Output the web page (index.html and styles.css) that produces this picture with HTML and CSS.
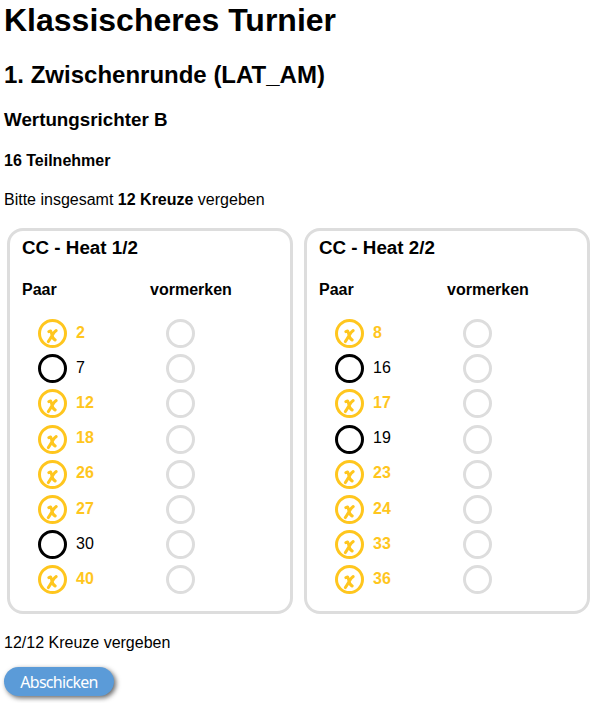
FILE: index.html
```html
<!DOCTYPE html>
<html lang="de">
<head>
<meta charset="utf-8">
<title>Klassischeres Turnier</title>
<link rel="stylesheet" href="styles.css">
</head>
<body>
<svg width="0" height="0" class="defs">
  <symbol id="cross" viewBox="0 0 29 29">
    <path d="M10.8 12.6L12.6 12Q13.5 13.6 14 16Q14.8 20 17.2 21M18.2 11.6Q16.2 13 14.4 16Q12.2 20 10.3 22.6" fill="none" stroke="currentColor" stroke-width="3" stroke-linecap="round" stroke-linejoin="round"/>
  </symbol>
</svg>
<h1>Klassischeres Turnier</h1>
<h2>1. Zwischenrunde (LAT_AM)</h2>
<h3>Wertungsrichter B</h3>
<h4>16 Teilnehmer</h4>
<p class="hint">Bitte insgesamt <b>12 Kreuze</b> vergeben</p>
<main class="heats"></main>
<p class="count">12/12 Kreuze vergeben</p>
<button class="submit"><span>Abschicken</span></button>
<script src="heats.js"></script>
</body>
</html>
```
FILE: styles.css
```css
* { box-sizing: border-box; }
body {
  margin: 0;
  min-height: 703px;
  padding: 2px 4px 0;
  background: #fff;
  color: #000;
  font: 16px/18px "Liberation Sans", Arial, sans-serif;
}
.defs { display: block; }
h1, h2, h3, h4, p { margin: 0; }
h1 { font-size: 32px; line-height: 36px; margin-bottom: 23px; }
h2 { font-size: 24px; line-height: 28px; margin-bottom: 20px; }
h3 { font-size: 18.8px; line-height: 22px; margin-bottom: 21px; }
h4 { font-size: 16px; line-height: 18px; margin-bottom: 21px; }
.heats {
  display: flex;
  gap: 11px;
  margin: 19px 0 20px 3px;
}
.heat {
  width: 286px;
  height: 386px;
  padding: 6px 12px 0;
  border: 3px solid #ddd;
  border-radius: 16px;
}
.heat h3 { margin-bottom: 22px; }
.head, .row {
  display: grid;
  grid-template-columns: 128px 1fr;
}
.head { font-weight: bold; margin-bottom: 17px; }
.row {
  height: 35.2px;
  align-items: center;
  padding-left: 16px;
}
.pair { display: flex; align-items: center; gap: 9px; }
.label { padding-bottom: 2px; }
.circle {
  width: 29px;
  height: 29px;
  border: 3px solid #000;
  border-radius: 50%;
}
.circle svg { display: block; width: 29px; height: 29px; margin: -3px; }
.marked { color: #ffc61e; font-weight: bold; }
.marked .circle { border-color: #ffc61e; }
.note { border-color: #ddd; }
.submit {
  display: block;
  width: 110px;
  height: 29px;
  margin-top: 15px;
  padding: 0;
  border: 0;
  border-radius: 15px;
  background: #5b9bd8;
  box-shadow: 2px 2px 5px rgba(0, 0, 0, .6);
  color: #fff;
  font: 16px/30px "Noto Sans", sans-serif;
  letter-spacing: -.7px;
}
```
FILE: heats.js
```js
const heats = [
  { title: "CC - Heat 1/2", pairs: [2, 7, 12, 18, 26, 27, 30, 40] },
  { title: "CC - Heat 2/2", pairs: [8, 16, 17, 19, 23, 24, 33, 36] }
];
const open = new Set([7, 30, 16, 19]);

const row = n => {
  const marked = !open.has(n);
  return `<div class="row">
    <div class="pair${marked ? " marked" : ""}">
      <span class="circle">${marked ? '<svg><use href="#cross"/></svg>' : ""}</span>
      <span class="label">${n}</span>
    </div>
    <span class="circle note"></span>
  </div>`;
};

document.querySelector(".heats").innerHTML = heats.map(h => `
  <section class="heat">
    <h3>${h.title}</h3>
    <div class="head"><span>Paar</span><span>vormerken</span></div>
    ${h.pairs.map(row).join("")}
  </section>`).join("");
```
